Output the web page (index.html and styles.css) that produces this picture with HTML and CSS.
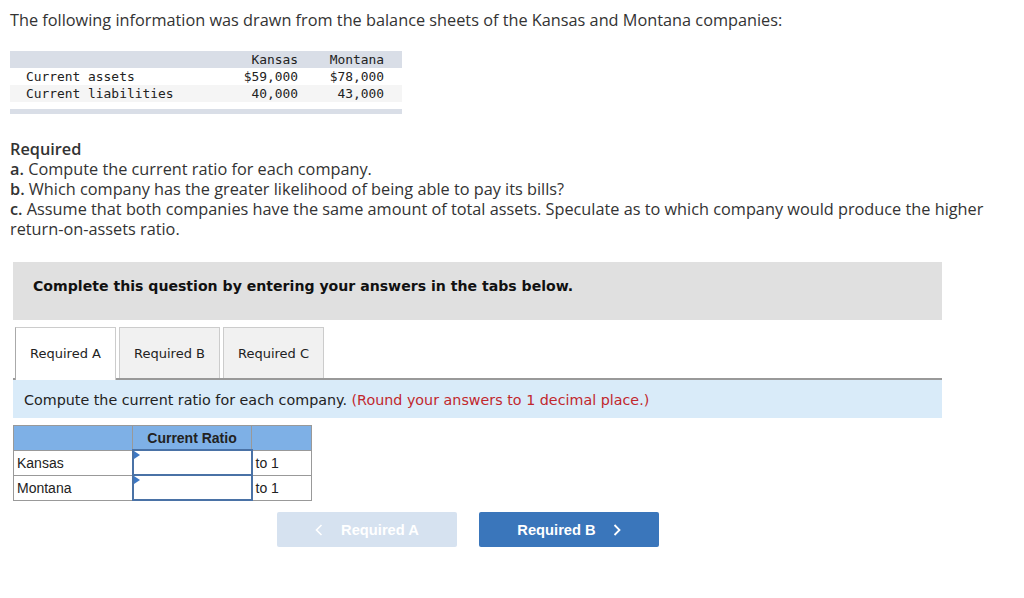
FILE: index.html
```html
<!DOCTYPE html>
<html>
<head>
<meta charset="utf-8">
<link rel="stylesheet" href="styles.css">
</head>
<body>
<p class="intro">The following information was drawn from the balance sheets of the Kansas and Montana companies:</p>

<div class="data">
  <div class="data-row head"><span></span><span class="num">Kansas</span><span class="num">Montana</span></div>
  <div class="data-row"><span>Current assets</span><span class="num">$59,000</span><span class="num">$78,000</span></div>
  <div class="data-row alt"><span>Current liabilities</span><span class="num">40,000</span><span class="num">43,000</span></div>
  <div class="data-foot"></div>
</div>

<div class="required">
  <div class="req-title">Required</div>
  <div><b>a.</b> Compute the current ratio for each company.</div>
  <div><b>b.</b> Which company has the greater likelihood of being able to pay its bills?</div>
  <div><b>c.</b> Assume that both companies have the same amount of total assets. Speculate as to which company would produce the higher return-on-assets ratio.</div>
</div>

<div class="question">
  <div class="banner">Complete this question by entering your answers in the tabs below.</div>
  <div class="tabs">
    <div class="tab active">Required A</div>
    <div class="tab">Required B</div>
    <div class="tab">Required C</div>
  </div>
  <div class="instruction">Compute the current ratio for each company. <span class="hint">(Round your answers to 1 decimal place.)</span></div>

  <table class="answers">
    <tr class="ahead"><th></th><th>Current Ratio</th><th></th></tr>
    <tr><td>Kansas</td><td class="input"><span class="flag"></span></td><td>to 1</td></tr>
    <tr><td>Montana</td><td class="input"><span class="flag"></span></td><td>to 1</td></tr>
  </table>

  <div class="nav">
    <div class="btn prev"><svg class="chev" width="8" height="12" viewBox="0 0 8 12"><path d="M6.5 1 L1.5 6 L6.5 11" fill="none" stroke="#fff" stroke-width="1.6"/></svg>Required A</div>
    <div class="btn next">Required B<svg class="chev" width="8" height="12" viewBox="0 0 8 12"><path d="M1.5 1 L6.5 6 L1.5 11" fill="none" stroke="#fff" stroke-width="1.8"/></svg></div>
  </div>
</div>
</body>
</html>
```
FILE: styles.css
```css
body {
  margin: 0;
  padding: 0 10px;
  font-family: "Open Sans", Lato, sans-serif;
  color: #333;
  background: #fff;
}
.intro {
  margin: 0;
  padding-top: 10px;
  font-size: 16.3px;
  line-height: 20px;
}
.data {
  width: 392px;
  margin-top: 21px;
  font-family: "DejaVu Sans Mono", monospace;
  font-size: 12.9px;
  color: #222;
}
.data-row {
  display: grid;
  grid-template-columns: 1fr 70px 86px;
  padding: 0 18px 0 16px;
  height: 17px;
  line-height: 17px;
}
.data-row.head { background: #d9dee7; }
.data-row.alt { background: #f5f5f5; }
.num { text-align: right; }
.data-foot {
  height: 5px;
  margin-top: 7px;
  background: #d9dee7;
}
.required {
  margin-top: 25px;
  font-size: 16.3px;
  line-height: 20px;
}
.req-title { font-weight: 600; }
.required b { font-weight: 600; }
.question {
  margin-top: 23px;
  margin-left: 3px;
  width: 929px;
}
.banner {
  height: 58px;
  box-sizing: border-box;
  padding: 16px 20px 0;
  background: #e0e0e0;
  font-family: "DejaVu Sans", Verdana, sans-serif;
  font-weight: bold;
  font-size: 14.1px;
  line-height: 16px;
  color: #111;
}
.tabs {
  display: flex;
  gap: 3px;
  margin-top: 7px;
  padding-left: 2px;
  border-bottom: 2px solid #999;
}
.tab {
  width: 101px;
  height: 51px;
  box-sizing: border-box;
  border: 1px solid #ccc;
  border-bottom: none;
  background: #f1f1f1;
  font-family: "DejaVu Sans", Verdana, sans-serif;
  font-size: 13px;
  line-height: 52px;
  text-align: center;
  color: #222;
}
.tab.active {
  background: #fff;
  height: 53px;
  margin-bottom: -2px;
  border-left-color: #aaa;
}
.instruction {
  height: 38px;
  line-height: 40px;
  padding-left: 11px;
  background: #d9ebf9;
  font-family: "DejaVu Sans", Verdana, sans-serif;
  font-size: 14.3px;
  color: #222;
}
.hint { color: #c1272d; }
.answers {
  margin-top: 7px;
  border-collapse: collapse;
  font-family: "Liberation Sans", Arial, sans-serif;
  font-size: 14px;
  color: #222;
}
.answers th, .answers td {
  border: 1px solid #999;
  height: 23px;
  padding: 0 3px;
  text-align: left;
}
.answers th {
  background: #7eb0e6;
  text-align: center;
  font-weight: bold;
  color: #222;
}
.answers th:nth-child(1) { width: 112px; }
.answers th:nth-child(2) { width: 112px; }
.answers th:nth-child(3) { width: 53px; }
.answers td.input {
  position: relative;
  border: 2px solid #4a72a6;
  background: #fff;
}
.flag {
  position: absolute;
  left: 0;
  top: 0;
  width: 0;
  height: 0;
  border-top: 4px solid transparent;
  border-bottom: 4px solid transparent;
  border-left: 6px solid #3d78c4;
}
.nav {
  display: flex;
  gap: 22px;
  margin-top: 11px;
  margin-left: 264px;
}
.btn {
  width: 180px;
  height: 35px;
  display: flex;
  align-items: center;
  justify-content: center;
  font-family: "Liberation Sans", Arial, sans-serif;
  font-weight: bold;
  font-size: 14.7px;
  color: #fff;
  border-radius: 2px;
}
.btn.prev { background: #d6e2f0; }
.btn.next { background: #3a76bb; }
.prev .chev { margin-right: 18px; }
.next .chev { margin-left: 17px; }
```
